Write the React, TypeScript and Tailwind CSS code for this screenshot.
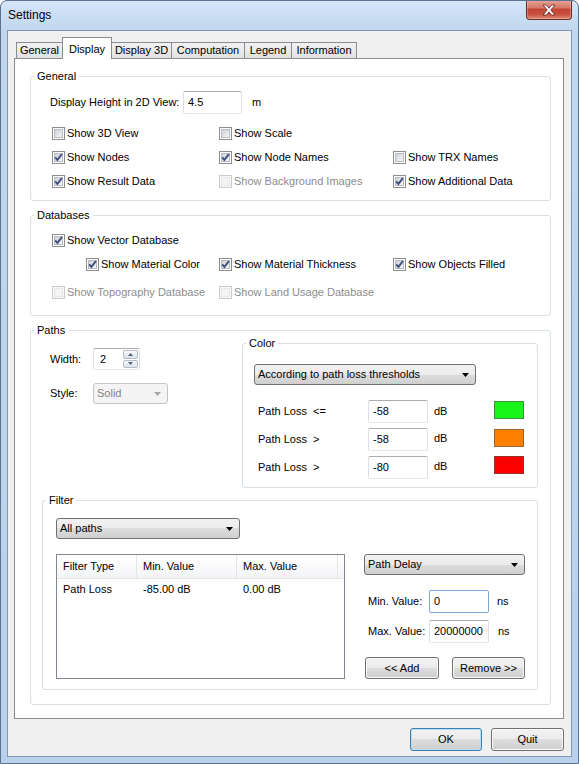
import React from 'react'
import clsx from 'clsx'

const BTN_BG = 'bg-[linear-gradient(#f2f2f2_0%,#ebebeb_50%,#dddddd_50%,#cfcfcf_100%)]'

function Group({ title, className, children }: { title: string; className?: string; children: React.ReactNode }) {
  return (
    <fieldset className={clsx('rounded-[3px] border border-[#d5dfe5]', className)}>
      <legend className="ml-[3px] px-[3px] leading-[13px]">{title}</legend>
      {children}
    </fieldset>
  )
}

function Check({ label, checked, disabled }: { label: string; checked?: boolean; disabled?: boolean }) {
  return (
    <div className="flex h-[24px] items-center gap-[2px]">
      <span
        className={clsx(
          'flex h-[13px] w-[13px] shrink-0 items-center justify-center border',
          disabled ? 'border-[#c9cbcd] bg-[#f7f7f7]' : 'border-[#8e8f8f] bg-white'
        )}
      >
        <span
          className={clsx(
            'relative h-[9px] w-[9px] border',
            disabled
              ? 'border-[#e6e6e6] bg-[#f4f4f4]'
              : 'border-[#b8bcc2] bg-gradient-to-br from-[#cdd1d7] to-[#f7f7f7]'
          )}
        >
          {checked && (
            <svg className="absolute -left-[1px] -top-[1px]" width="9" height="9" viewBox="0 0 9 9">
              <path d="M1.2 4.4 L3.4 6.9 L7.9 1.2" stroke="#3f517f" strokeWidth="1.9" fill="none" />
            </svg>
          )}
        </span>
      </span>
      <span className={clsx('whitespace-nowrap', disabled && 'text-[#8d8d8d]')}>{label}</span>
    </div>
  )
}

function TextBox({ value, className, focused }: { value: string; className?: string; focused?: boolean }) {
  return (
    <div
      className={clsx(
        'flex h-[23px] items-center rounded-[2px] border bg-white pb-[1px] pl-[4px]',
        focused
          ? 'border-[#7ca6d3]'
          : 'border-[#abadb3] border-b-[#e3e9ef] border-l-[#dbdfe6] border-r-[#dbdfe6]',
        className
      )}
    >
      {value}
    </div>
  )
}

function Combo({ value, className, disabled }: { value: string; className?: string; disabled?: boolean }) {
  return (
    <div
      className={clsx(
        'flex h-[21px] items-center justify-between rounded-[3px] border pl-[3px] pr-[6px]',
        disabled ? 'border-[#c2c5c8] bg-[#f4f4f4] text-[#838383]' : clsx('border-[#707070]', BTN_BG),
        className
      )}
    >
      <span className="whitespace-nowrap">{value}</span>
      <svg width="7" height="4" viewBox="0 0 7 4">
        <path d="M0 0h7L3.5 4z" fill={disabled ? '#a7a7a7' : '#000'} />
      </svg>
    </div>
  )
}

function Btn({ children, className, primary }: { children: React.ReactNode; className?: string; primary?: boolean }) {
  return (
    <div
      className={clsx(
        'flex h-[22px] items-center justify-center rounded-[3px] border',
        BTN_BG,
        primary ? 'border-[#3c7fb1] shadow-[inset_0_0_0_1px_#b6dff7]' : 'border-[#707070] shadow-[inset_0_0_0_1px_#fafafa]',
        className
      )}
    >
      {children}
    </div>
  )
}

function Spin() {
  return (
    <div className="flex h-[22px] w-[47px] rounded-[2px] border border-[#abadb3] border-b-[#e3e9ef] border-l-[#dbdfe6] border-r-[#dbdfe6] bg-white">
      <span className="flex-1 pl-[6px] pt-[2px]">2</span>
      <div className="flex flex-col gap-[1px] py-[1px] pr-[1px]">
        <span className="flex h-[9px] w-[15px] items-center justify-center rounded-[2px] border border-[#b6bdc5] bg-gradient-to-b from-[#f8f9fa] to-[#dde2e8]">
          <svg width="5" height="3" viewBox="0 0 5 3">
            <path d="M0 3h5L2.5 0z" fill="#4c607a" />
          </svg>
        </span>
        <span className="flex h-[9px] w-[15px] items-center justify-center rounded-[2px] border border-[#b6bdc5] bg-gradient-to-b from-[#f8f9fa] to-[#dde2e8]">
          <svg width="5" height="3" viewBox="0 0 5 3">
            <path d="M0 0h5L2.5 3z" fill="#4c607a" />
          </svg>
        </span>
      </div>
    </div>
  )
}

const THRESHOLDS = [
  { label: 'Path Loss  <=', value: '-58', fill: 'bg-[#19f519]', border: 'border-[#3f8f3f]' },
  { label: 'Path Loss  >', value: '-58', fill: 'bg-[#ff8000]', border: 'border-[#9a6430]' },
  { label: 'Path Loss  >', value: '-80', fill: 'bg-[#ff0000]', border: 'border-[#9a3030]' },
]

const TABS = [
  { name: 'General', w: 'w-[47px]' },
  { name: 'Display', w: 'w-[50px]', active: true },
  { name: 'Display 3D', w: 'w-[61px]' },
  { name: 'Computation', w: 'w-[74px]' },
  { name: 'Legend', w: 'w-[48px]' },
  { name: 'Information', w: 'w-[66px]' },
]

function DisplayTab() {
  return (
    <div className="flex flex-1 flex-col border border-[#898c95] bg-white pl-[15px] pr-[12px] pt-[11px]">
      {/* General */}
      <Group title="General">
        <div className="pb-[7px] pl-[19px] pt-[8px]">
          <div className="flex h-[23px] items-center">
            <span className="w-[133px]">Display Height in 2D View:</span>
            <TextBox value="4.5" className="w-[59px]" />
            <span className="ml-[10px]">m</span>
          </div>
          <div className="ml-[2px] mt-[7px] grid grid-cols-[167px_174px_1fr]">
            <Check label="Show 3D View" />
            <Check label="Show Scale" />
            <div />
            <Check label="Show Nodes" checked />
            <Check label="Show Node Names" checked />
            <Check label="Show TRX Names" />
            <Check label="Show Result Data" checked />
            <Check label="Show Background Images" disabled />
            <Check label="Show Additional Data" checked />
          </div>
        </div>
      </Group>

      {/* Databases */}
      <Group title="Databases" className="mt-[8px]">
        <div className="pb-[11px] pl-[21px] pt-[6px]">
          <Check label="Show Vector Database" checked />
          <div className="grid grid-cols-[133px_174px_1fr] pl-[34px]">
            <Check label="Show Material Color" checked />
            <Check label="Show Material Thickness" checked />
            <Check label="Show Objects Filled" checked />
          </div>
          <div className="mt-[4px] grid grid-cols-[167px_1fr]">
            <Check label="Show Topography Database" disabled />
            <Check label="Show Land Usage Database" disabled />
          </div>
        </div>
      </Group>

      {/* Paths */}
      <Group title="Paths" className="mt-[8px]">
        <div className="pb-[14px] pl-[11px] pr-[12px]">
          <div className="flex">
            <div className="w-[200px] pl-[8px] pt-[11px]">
              <div className="flex h-[22px] items-center">
                <span className="w-[43px]">Width:</span>
                <Spin />
              </div>
              <div className="mt-[13px] flex items-center">
                <span className="w-[43px]">Style:</span>
                <Combo value="Solid" disabled className="w-[75px]" />
              </div>
            </div>
            <Group title="Color" className="flex-1">
              <div className="pb-[8px] pl-[11px] pt-[14px]">
                <Combo value="According to path loss thresholds" className="w-[222px]" />
                <div className="mt-[15px] flex flex-col gap-[5px]">
                  {THRESHOLDS.map((t, i) => (
                    <div key={i} className="flex h-[23px] items-center">
                      <span className="w-[114px] whitespace-pre pl-[4px]">{t.label}</span>
                      <TextBox value={t.value} className="w-[60px]" />
                      <span className={clsx('w-[66px] pl-[6px]', i > 0 && '-mt-[3px]')}>dB</span>
                      <span className={clsx('h-[18px] w-[30px] self-start border', i < 2 && 'mt-[1px]', t.fill, t.border)} />
                    </div>
                  ))}
                </div>
              </div>
            </Group>
          </div>

          {/* Filter */}
          <Group title="Filter" className="mt-[6px]">
            <div className="pb-[10px] pl-[13px] pr-[12px] pt-[11px]">
              <Combo value="All paths" className="w-[184px]" />
              <div className="mt-[15px] flex justify-between">
                <div className="h-[125px] w-[289px] border border-[#828790] bg-white">
                  <div className="flex h-[24px] border-b border-[#e5e5e5] bg-gradient-to-b from-white to-[#f3f4f6]">
                    <div className="flex w-[80px] items-center border-r border-[#e3e5e8] pl-[6px]">Filter Type</div>
                    <div className="flex w-[100px] items-center border-r border-[#e3e5e8] pl-[6px]">Min. Value</div>
                    <div className="flex w-[101px] items-center border-r border-[#e3e5e8] pl-[6px]">Max. Value</div>
                  </div>
                  <div className="flex h-[20px] items-center">
                    <div className="w-[80px] pl-[6px]">Path Loss</div>
                    <div className="w-[100px] pl-[6px]">-85.00 dB</div>
                    <div className="w-[101px] pl-[6px]">0.00 dB</div>
                  </div>
                </div>
                <div className="w-[161px]">
                  <Combo value="Path Delay" />
                  <div className="mt-[15px] flex h-[23px] items-center">
                    <span className="w-[65px] pl-[4px]">Min. Value:</span>
                    <TextBox value="0" focused className="w-[60px]" />
                    <span className="ml-[8px]">ns</span>
                  </div>
                  <div className="mt-[7px] flex h-[23px] items-center">
                    <span className="w-[65px] pl-[4px]">Max. Value:</span>
                    <TextBox value="20000000" className="w-[60px]" />
                    <span className="ml-[9px]">ns</span>
                  </div>
                  <div className="mt-[14px] flex justify-between">
                    <Btn className="ml-[1px] w-[74px]">&lt;&lt; Add</Btn>
                    <Btn className="w-[73px]">Remove &gt;&gt;</Btn>
                  </div>
                </div>
              </div>
            </div>
          </Group>
        </div>
      </Group>
    </div>
  )
}

export default function App() {
  return (
    <div className="flex h-[764px] w-[579px] flex-col overflow-hidden rounded-t-[7px] border border-[#5a7190] bg-[linear-gradient(180deg,#d4e5f7_0px,#c0d7ef_30px,#b9d1ea_100%)] font-['Liberation_Sans',Arial,sans-serif] text-[11px] text-black">
      {/* Title bar */}
      <div className="flex h-[29px] shrink-0 items-start justify-between pr-[6px]">
        <span className="pl-[7px] pt-[7px] text-[12px] leading-[14px]">Settings</span>
        <div className="-mt-[1px] flex h-[20px] w-[46px] items-center justify-center rounded-b-[4px] border border-t-0 border-[#6b2b25] bg-[linear-gradient(180deg,#e8a596_0%,#d6786a_40%,#c24534_50%,#c9503f_75%,#dc8a6f_100%)] shadow-[inset_0_0_0_1px_rgba(255,255,255,0.25)]">
          <svg width="14" height="12" viewBox="0 0 14 12">
            <path
              d="M1 1h3.5L7 4.2L9.5 1H13L8.8 6L13 11H9.5L7 7.8L4.5 11H1L5.2 6z"
              fill="#fff"
              stroke="#5a2620"
              strokeWidth="0.8"
              strokeLinejoin="round"
            />
          </svg>
        </div>
      </div>

      {/* Client area */}
      <div className="mx-[6px] mb-[6px] flex flex-1 flex-col border border-[#8497b0] bg-[#f0f0f0] pb-[5px] pl-[6px] pr-[7px] pt-[6px]">
        <div className="ml-[2px] flex h-[21px] items-end">
          {TABS.map((t, i) => (
            <div
              key={t.name}
              className={clsx(
                'flex justify-center border border-b-0 border-[#898c95]',
                i > 0 && '-ml-[1px]',
                t.w,
                t.active
                  ? 'relative z-10 -mb-[1px] h-[22px] bg-white pt-[3px]'
                  : 'h-[16px] items-center bg-[linear-gradient(#f2f2f2,#e1e1e1)] pb-[1px]'
              )}
            >
              {t.name}
            </div>
          ))}
        </div>
        <DisplayTab />
        <div className="mt-[9px] flex justify-end gap-[9px]">
          <Btn primary className="h-[23px] w-[72px]">OK</Btn>
          <Btn className="h-[23px] w-[73px]">Quit</Btn>
        </div>
      </div>
    </div>
  )
}
